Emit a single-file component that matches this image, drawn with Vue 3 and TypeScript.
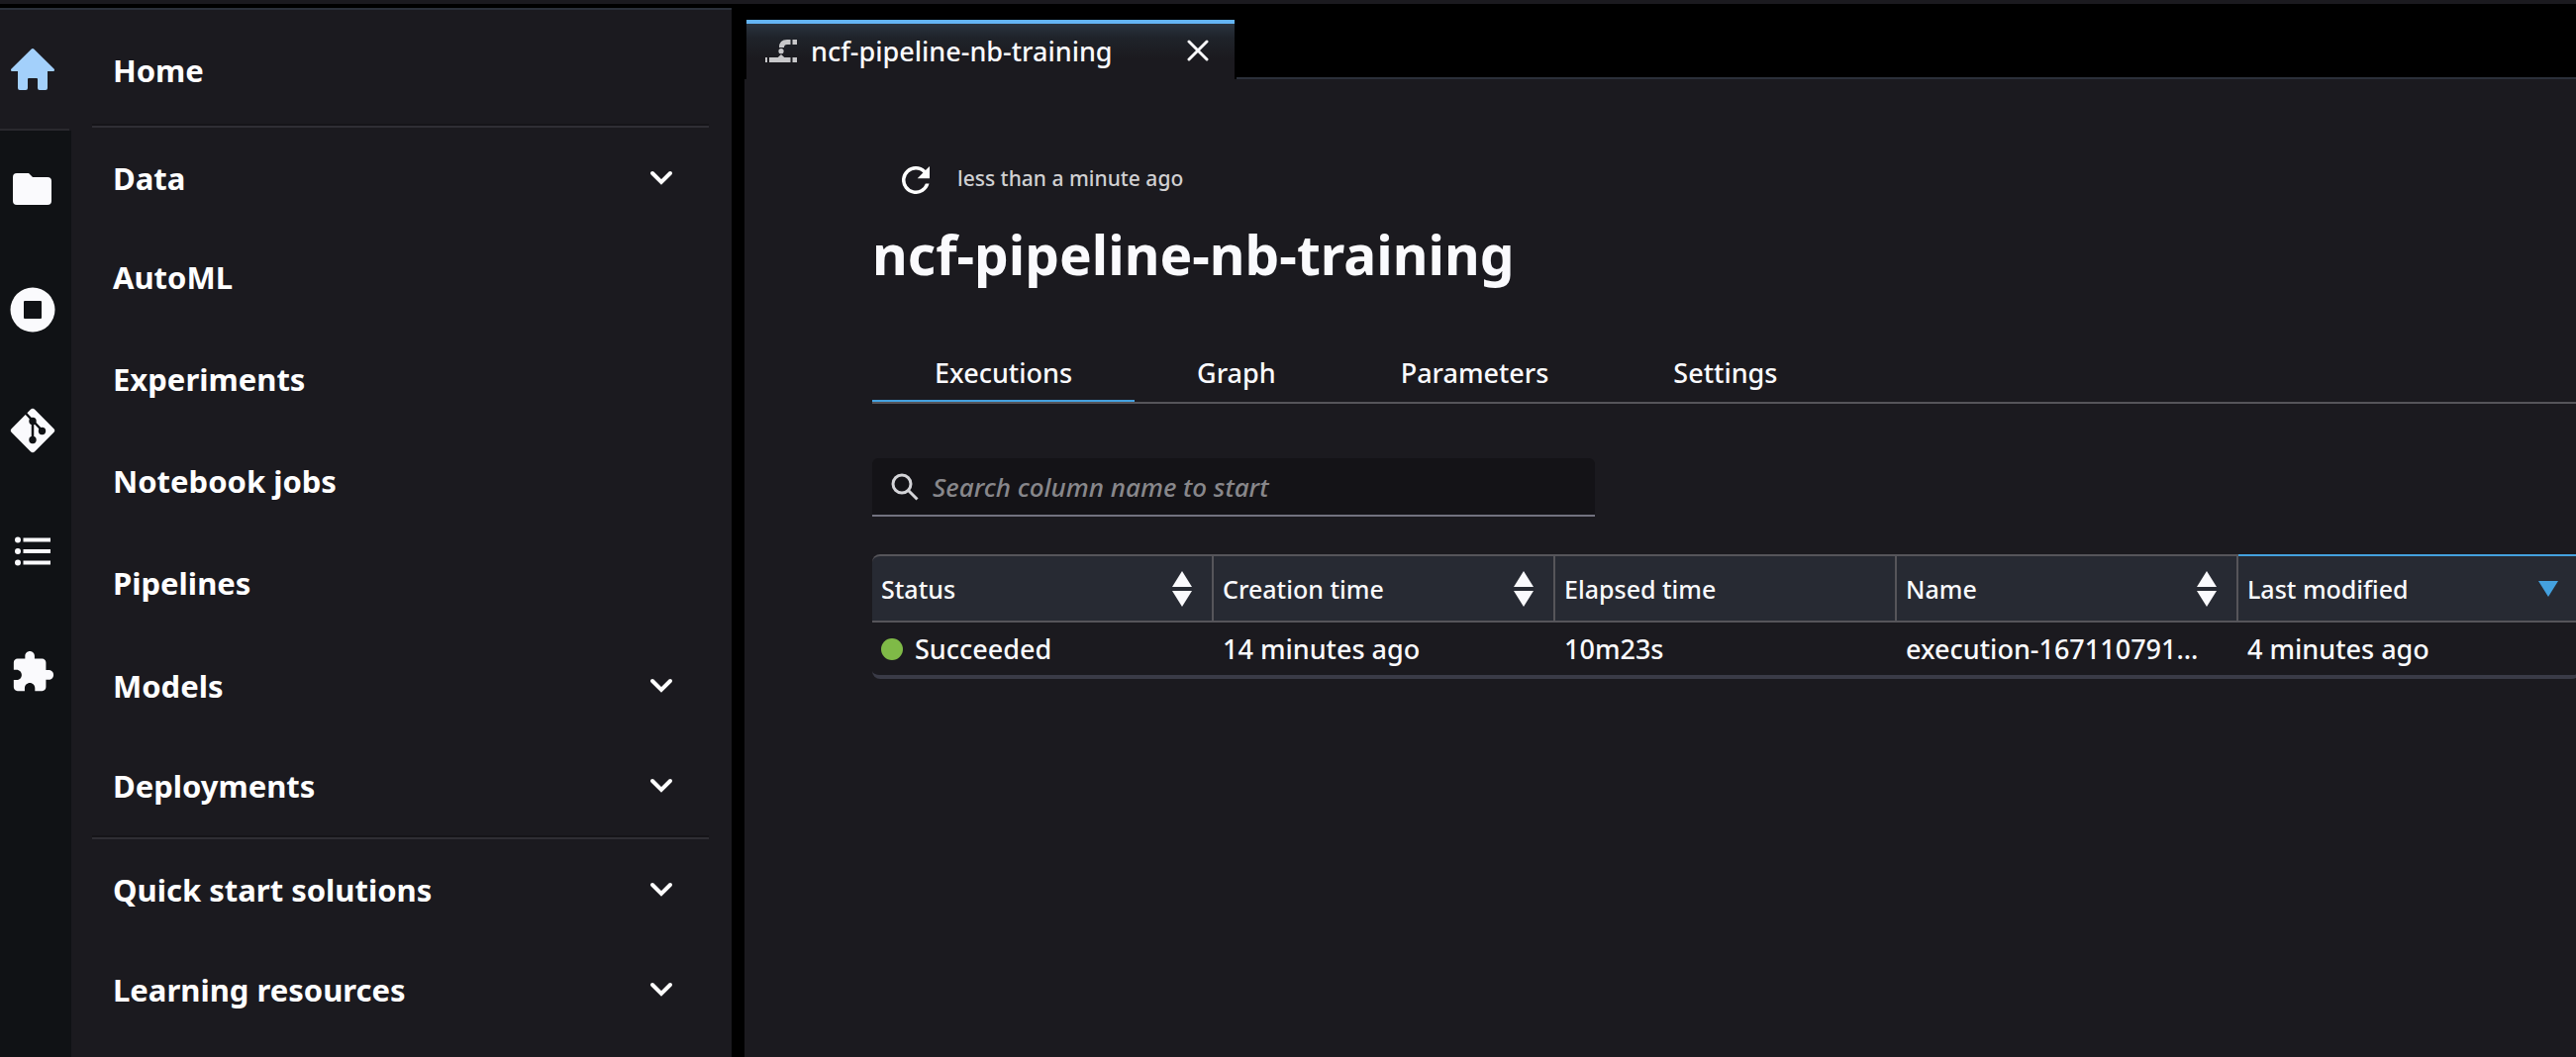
<script setup lang="ts">
interface NavItem { label: string; expandable?: boolean }

const mainNav: NavItem[] = [
  { label: 'Data', expandable: true },
  { label: 'AutoML' },
  { label: 'Experiments' },
  { label: 'Notebook jobs' },
  { label: 'Pipelines' },
  { label: 'Models', expandable: true },
  { label: 'Deployments', expandable: true },
]
const helpNav: NavItem[] = [
  { label: 'Quick start solutions', expandable: true },
  { label: 'Learning resources', expandable: true },
]
const groups = [mainNav, helpNav]

const tabs = ['Executions', 'Graph', 'Parameters', 'Settings']

const columns = [
  { label: 'Status', sort: 'both' },
  { label: 'Creation time', sort: 'both' },
  { label: 'Elapsed time', sort: 'none' },
  { label: 'Name', sort: 'both' },
  { label: 'Last modified', sort: 'desc' },
]
</script>

<template>
  <div class="app">
    <div class="topbar"></div>
    <div class="shell">
      <aside class="left">
        <div class="rail">
          <button class="rail-btn active" aria-label="Home">
            <svg width="44" height="42" viewBox="0 0 44 42" fill="#a3d0fb">
              <path d="M20.800.5a2 2 0 0 1 2.400 0L43.500 20.500c1 1 .5 2.500-1 2.500H37v17a2 2 0 0 1-2 2h-6a2 2 0 0 1-2-2V31a1 1 0 0 0-1-1h-8a1 1 0 0 0-1 1v9a2 2 0 0 1-2 2H9a2 2 0 0 1-2-2V23H1.500C0 23-.5 21.500.5 20.500z" />
            </svg>
          </button>
          <button class="rail-btn" aria-label="File browser">
            <svg width="40" height="32" viewBox="0 0 40 32" fill="#fafafd">
              <path d="M4 0h12l4 4h15a4 4 0 0 1 4 4v20a4 4 0 0 1-4 4H4a4 4 0 0 1-4-4V4a4 4 0 0 1 4-4z" />
            </svg>
          </button>
          <button class="rail-btn" aria-label="Running terminals and kernels">
            <svg width="46" height="46" viewBox="0 0 46 46">
              <circle cx="23" cy="23" r="22.500" fill="#fafafd" />
              <rect x="14" y="14" width="18" height="18" rx="1" fill="#101215" />
            </svg>
          </button>
          <button class="rail-btn" aria-label="Git">
            <svg width="46" height="46" viewBox="0 0 46 46">
              <rect x="6.500" y="6.500" width="33" height="33" rx="3" transform="rotate(45 23 23)" fill="#fafafd" />
              <g stroke="#101215" stroke-width="2.500" fill="none"><path d="M15 4.500 33 23.500M23 14v19" /></g>
              <g fill="#101215"><circle cx="23" cy="13.500" r="3.700" /><circle cx="32.500" cy="23.500" r="3.700" /><circle cx="23" cy="32.500" r="3.700" /></g>
            </svg>
          </button>
          <button class="rail-btn" aria-label="Table of contents">
            <svg width="36" height="30" viewBox="0 0 36 30" fill="#fafafd">
              <circle cx="3" cy="3.500" r="3" /><circle cx="3" cy="15" r="3" /><circle cx="3" cy="26.500" r="3" />
              <path d="M8.500 1.500H36v4H8.500zM8.500 13H36v4H8.500zM8.500 24.500H36v4H8.500z" />
            </svg>
          </button>
          <button class="rail-btn" aria-label="Extensions">
            <svg width="46" height="46" viewBox="0 0 24 24" fill="#fafafd">
              <path d="M20.500 11H19V7c0-1.100-.9-2-2-2h-4V3.500C13 2.120 11.880 1 10.500 1S8 2.120 8 3.500V5H4c-1.100 0-1.990.9-1.990 2v3.800H3.500c1.490 0 2.700 1.210 2.700 2.700s-1.210 2.700-2.700 2.700H2V20c0 1.100.9 2 2 2h3.800v-1.500c0-1.490 1.210-2.700 2.700-2.700s2.700 1.210 2.700 2.700V22H17c1.100 0 2-.9 2-2v-4h1.500c1.380 0 2.500-1.120 2.500-2.500S21.880 11 20.500 11z" />
            </svg>
          </button>
        </div>

        <nav class="nav">
          <a href="#home" class="nav-row home">Home</a>
          <div v-for="(group, g) in groups" :key="g" class="group">
            <template v-for="item in group" :key="item.label">
              <button v-if="item.expandable" class="nav-row expandable">
                <span>{{ item.label }}</span>
                <svg width="24" height="16" viewBox="0 0 24 16" fill="none" stroke="#fff" stroke-width="4" stroke-linecap="round">
                  <path d="M3 3l9 9 9-9" />
                </svg>
              </button>
              <a v-else href="#" class="nav-row">{{ item.label }}</a>
            </template>
          </div>
        </nav>
      </aside>

      <main class="main">
        <div class="doc-tabs">
          <div class="doc-tab">
            <svg width="32" height="24" viewBox="0 0 32 24" fill="none" stroke="#c8c8ca" stroke-width="5">
              <path d="M32 3.500h-4.500M25.500 3.500H22Q16.500 3.500 16.500 9M0 21.500h2M4 21.500h21.500M27.500 21.500H32" />
              <path d="M16 16l5.500 5h-11z" fill="#c8c8ca" stroke="none" />
              <circle cx="16" cy="12.700" r="2.600" fill="#c8c8ca" stroke="none" />
            </svg>
            <span class="doc-name">ncf-pipeline-nb-training</span>
            <button class="close" aria-label="Close tab">
              <svg width="22" height="22" viewBox="0 0 22 22" stroke="#fafafd" stroke-width="3" stroke-linecap="round">
                <path d="M2 2l18 18M20 2L2 20" />
              </svg>
            </button>
          </div>
          <div class="doc-fill"></div>
        </div>

        <section class="content">
          <div class="refresh-line">
            <button class="refresh" aria-label="Refresh">
              <svg width="28" height="28" viewBox="0 0 16 16" fill="#fff">
                <path d="M13.650 2.350A7.960 7.960 0 0 0 8 0a8 8 0 1 0 7.730 10h-2.080A6 6 0 1 1 8 2c1.660 0 3.140.69 4.220 1.780L9 7h7V0z" />
              </svg>
            </button>
            <span class="ago">less than a minute ago</span>
          </div>
          <h1>ncf-pipeline-nb-training</h1>

          <div class="tabs" role="tablist">
            <button v-for="(tab, i) in tabs" :key="tab" role="tab" :aria-selected="i === 0" class="tab" :class="{ selected: i === 0 }">{{ tab }}</button>
          </div>

          <label class="search">
            <svg width="28" height="28" viewBox="0 0 28 28" fill="none" stroke="#d4d4d8" stroke-width="3">
              <circle cx="11" cy="11" r="9" /><path d="M17.500 17.500 26.500 26.500" />
            </svg>
            <input type="text" placeholder="Search column name to start" aria-label="Search executions" />
          </label>

          <div class="table-wrap">
            <table>
              <thead>
                <tr>
                  <th v-for="col in columns" :key="col.label" :class="{ sorted: col.sort === 'desc' }">
                    <div class="th">
                      <span>{{ col.label }}</span>
                      <svg v-if="col.sort === 'both'" width="20" height="36" viewBox="0 0 20 36" fill="#fafafd"><path d="M10 0l10 16H0zM0 20h20L10 36z" /></svg>
                      <svg v-else-if="col.sort === 'desc'" width="20" height="16" viewBox="0 0 20 16" fill="#44a1df"><path d="M0 0h20L10 16z" /></svg>
                    </div>
                  </th>
                </tr>
              </thead>
              <tbody>
                <tr>
                  <td><div class="status"><i class="dot"></i>Succeeded</div></td>
                  <td>14 minutes ago</td>
                  <td>10m23s</td>
                  <td>execution-167110791…</td>
                  <td>4 minutes ago</td>
                </tr>
              </tbody>
            </table>
          </div>
        </section>
      </main>
    </div>
  </div>
</template>

<style>
body {
  margin: 0;
  background: #000;
}
</style>

<style scoped>
.app {
  min-height: 100vh;
  display: flex;
  flex-direction: column;
  overflow: hidden;
  background: #000;
  color: #fafafd;
  font-family: "Noto Sans", "Open Sans", sans-serif;
  font-weight: 500;
}
.app * {
  box-sizing: border-box;
}
svg {
  display: block;
  flex: none;
}
button {
  margin: 0;
  padding: 0;
  border: 0;
  background: none;
  color: inherit;
  font: inherit;
  cursor: pointer;
}
.topbar {
  height: 4px;
  background: #1b1a1f;
}
.shell {
  flex: 1;
  display: flex;
  gap: 13px;
  padding-top: 4px;
}
.left {
  flex: none;
  width: 739px;
  display: flex;
  background: #1b1a1f;
  border-top: 2px solid #2b303a;
}
.rail {
  width: 72px;
  display: flex;
  flex-direction: column;
  background: #101215;
}
.rail-btn {
  height: 122px;
  padding: 0 6px 5px 0;
  display: flex;
  align-items: center;
  justify-content: center;
}
.rail-btn.active {
  width: 70px;
  padding: 0 4px 0 0;
  background: #1b1a1f;
  border-bottom: 2px solid #2a292e;
  box-shadow: 2px 0 #1b1a1f;
}
.nav {
  flex: 1;
  padding: 0 23px 0 21px;
}
.nav-row {
  width: 100%;
  height: 103px;
  padding: 0 36px 4px 21px;
  display: flex;
  align-items: center;
  justify-content: space-between;
  font-size: 31px;
  line-height: 44px;
  font-weight: 700;
  color: #fff;
  text-decoration: none;
}
.nav-row.expandable {
  height: 101px;
  padding-bottom: 0;
}
.nav-row.home {
  height: 115px;
  padding-top: 10px;
}
.group {
  border-top: 2px solid #2f2e34;
  box-shadow: 0 -2px #151418;
  margin-top: 2px;
}
.main {
  flex: 1;
  min-width: 0;
  display: flex;
  flex-direction: column;
}
.doc-tabs {
  height: 72px;
  padding: 12px 0 0 2px;
  display: flex;
  gap: 2px;
}
.doc-tab {
  width: 493px;
  display: flex;
  align-items: center;
  padding: 0 26px 0 19px;
  border-top: 4px solid #64b5f6;
  background: linear-gradient(#2a3440, #1f232a 14px, #1b1a1f 36px);
  font-size: 27px;
  line-height: 36px;
}
.doc-tab svg {
  margin-bottom: 2px;
}
.doc-name {
  flex: 1;
  padding-left: 14px;
}
.doc-fill {
  flex: 1;
  border-bottom: 2px solid #2b303a;
}
.content {
  flex: 1;
  padding: 80px 0 0 129px;
  background: #1b1a1f;
}
.refresh-line {
  display: flex;
  align-items: center;
  gap: 28px;
  height: 44px;
  padding-left: 30px;
  font-size: 21px;
  line-height: 30px;
  color: #d0d0d2;
}
.ago {
  padding-bottom: 4px;
}
h1 {
  margin: 13px 0 0;
  font-size: 55px;
  line-height: 80px;
  font-weight: 700;
}
.tabs {
  display: flex;
  height: 70px;
  margin-top: 41px;
  border-bottom: 2px solid #56555a;
}
.tab {
  padding: 12px 63px 0;
  border-bottom: 2px solid transparent;
  font-size: 27px;
  line-height: 36px;
}
.tab.selected {
  border-bottom-color: #44a1df;
}
.search {
  width: 730px;
  height: 59px;
  margin-top: 55px;
  padding: 0 16px 0 19px;
  display: flex;
  align-items: center;
  gap: 14px;
  background: #141317;
  border-bottom: 2px solid #72727f;
  border-radius: 6px 6px 0 0;
}
.search input {
  flex: 1;
  min-width: 0;
  padding: 0;
  border: 0;
  outline: 0;
  background: none;
  color: #fafafd;
  font: italic 500 26px/36px "Noto Sans", "Open Sans", sans-serif;
}
.search input::placeholder {
  color: #88878b;
  opacity: 1;
}
.table-wrap {
  margin-top: 38px;
  overflow: hidden;
}
table {
  width: calc(100% + 4px);
  table-layout: fixed;
  border-collapse: separate;
  border-spacing: 0;
  border-bottom: 4px solid #3a3b47;
  border-radius: 8px;
}
th {
  height: 69px;
  padding: 0 20px 0 9px;
  background: #272a33;
  border-top: 2px solid #56555a;
  border-bottom: 2px solid #56555a;
  border-right: 2px solid #56555a;
  font-size: 25px;
  line-height: 36px;
  font-weight: 500;
  text-align: left;
}
th:first-child {
  border-top-left-radius: 8px;
}
th.sorted {
  border-top-color: #44a1df;
}
.th {
  display: flex;
  align-items: center;
  justify-content: space-between;
}
td {
  height: 53px;
  padding: 0 9px;
  font-size: 27px;
  line-height: 36px;
  white-space: nowrap;
  overflow: hidden;
  text-overflow: ellipsis;
}
.status {
  display: flex;
  align-items: center;
  gap: 12px;
}
.dot {
  width: 22px;
  height: 22px;
  border-radius: 50%;
  background: #7fba47;
}
</style>
